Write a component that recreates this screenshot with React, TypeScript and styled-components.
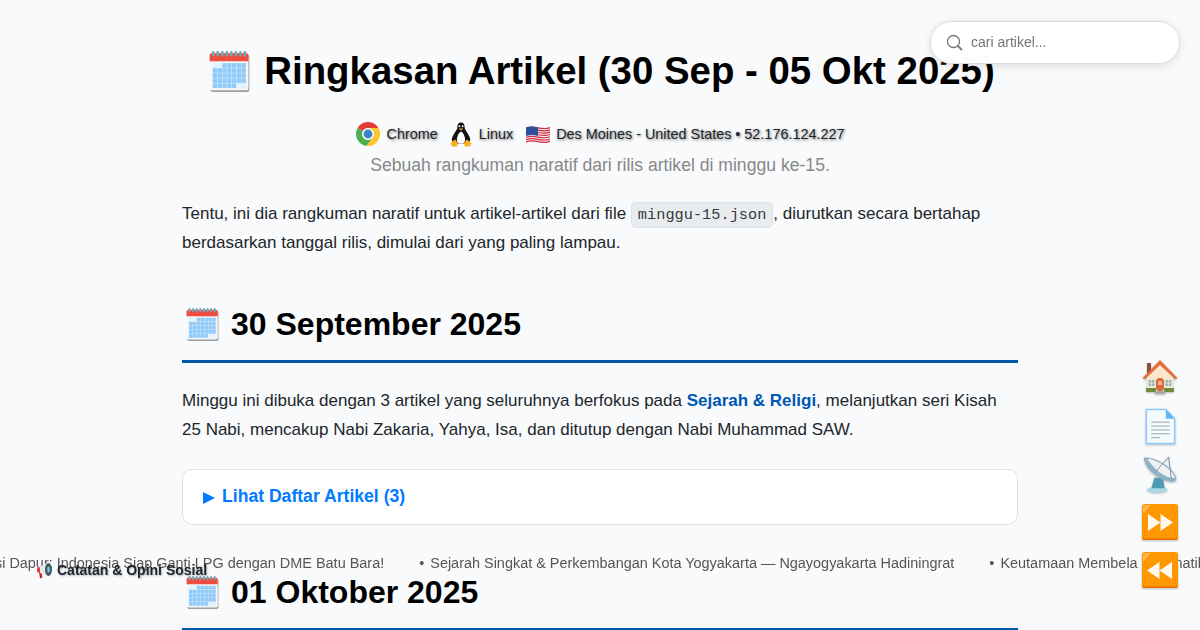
import React from 'react';
import styled, { createGlobalStyle } from 'styled-components';

const GlobalStyle = createGlobalStyle`
    html, body {
        margin: 0;
        padding: 0;
        height: 630px;
        overflow: hidden;
        background: #f8fafc;
        color: #212529;
        font-family: "Liberation Sans", Arial, sans-serif;
    }
`;

const Page = styled.div`
    width: 836px;
    margin: 0 auto;
    padding-top: 46px;
`;

const Title = styled.h1`
    margin: 0;
    display: flex;
    justify-content: center;
    align-items: center;
    gap: 14px;
    height: 50px;
    color: #000;
    font-size: 38.4px;
    font-weight: 700;
    line-height: 50px;

    svg {
        margin-left: 4px;
    }
`;

const Meta = styled.div`
    display: flex;
    justify-content: center;
    align-items: center;
    margin-top: 25px;
    height: 26px;
    font-size: 14.4px;
    color: #212529;
    text-shadow: 1px 1px 3px rgba(0, 0, 0, 0.55);
`;

const MetaItem = styled.span<{ $gap: number }>`
    display: inline-flex;
    align-items: center;
    gap: ${props => props.$gap}px;
    margin-right: 12px;

    &:last-child {
        margin-right: 0;
    }
`;

const Subtitle = styled.p`
    margin: 5px 0 0;
    text-align: center;
    color: #888;
    font-size: 17.6px;
    line-height: 26px;
`;

const Paragraph = styled.p<{ $afterHeading?: boolean }>`
    margin: ${props => (props.$afterHeading ? '23px' : '21px')} 0 0;
    font-size: 17px;
    line-height: 29px;
    color: #212529;
`;

const Code = styled.code`
    font-family: "Liberation Mono", monospace;
    font-size: 15.3px;
    line-height: 1;
    color: #343a40;
    background: #e9ecef;
    border: 1px solid #dee2e6;
    border-radius: 5px;
    padding: 3px 6px;
`;

const DateHeading = styled.h2`
    display: flex;
    align-items: center;
    gap: 12px;
    margin: 47px 0 0;
    padding-bottom: 16px;
    border-bottom: 3px solid #0056a8;
    color: #000;
    font-size: 32px;
    line-height: 40px;
    font-weight: 700;

    svg {
        margin-left: 4px;
    }
`;

const Category = styled.a`
    color: #0056b3;
    font-weight: 700;
    text-decoration: none;
`;

const Details = styled.div`
    margin-top: 25px;
    height: 52px;
    display: flex;
    align-items: center;
    gap: 7px;
    padding: 0 0 2px 20px;
    background: #fff;
    border: 1px solid #dee2e6;
    border-radius: 10px;
    color: #007bff;
    font-size: 17.6px;
    font-weight: 700;
`;

const Caret = styled.span`
    width: 0;
    height: 0;
    margin-top: 3px;
    border-left: 12px solid #007bff;
    border-top: 6.5px solid transparent;
    border-bottom: 6.5px solid transparent;
`;

const SearchBox = styled.div`
    position: fixed;
    top: 21px;
    left: 930px;
    width: 250px;
    height: 43px;
    box-sizing: border-box;
    display: flex;
    align-items: center;
    gap: 8px;
    padding: 0 0 1px 15px;
    background: rgba(255, 255, 255, 0.98);
    border: 1px solid #d8dade;
    border-radius: 22px;
    box-shadow: 0 2px 8px rgba(0, 0, 0, 0.12);
    color: #757575;
    font-size: 14px;
`;

const SideNav = styled.nav`
    position: fixed;
    top: 360px;
    right: 22px;
    display: flex;
    flex-direction: column;
    gap: 12px;
    z-index: 3;
`;

const SideItem = styled.a`
    width: 36px;
    height: 36px;
    display: flex;
    align-items: center;
    justify-content: center;
    filter: drop-shadow(0 1px 1px rgba(0, 0, 0, 0.25));

    svg {
        flex-shrink: 0;
    }
`;

const Ticker = styled.div`
    position: fixed;
    top: 554px;
    left: 0;
    right: 0;
    height: 18px;
    overflow: hidden;
    white-space: nowrap;
    font-size: 14.45px;
    line-height: 18px;
    color: #555;
`;

const TickerTrack = styled.div`
    display: flex;
    gap: 35px;
    transform: translateX(-50px);
`;

const Bullet = styled.span`
    margin-right: 6px;
`;

const TickerLabel = styled.div`
    position: fixed;
    top: 561px;
    left: 36px;
    display: flex;
    align-items: center;
    gap: 4px;
    font-size: 14px;
    line-height: 18px;
    font-weight: 700;
    color: #212529;
    text-shadow: 1px 1px 2px rgba(0, 0, 0, 0.3);
`;

function CalendarIcon({ size }: { size: number }) {
    const cells = [];
    for (let row = 0; row < 5; row++) {
        for (let col = 0; col < 7; col++) {
            const pale = (row === 0 && col < 2) || (row === 4 && col > 4);
            cells.push(
                <rect
                    key={`${row}-${col}`}
                    x={5.5 + col * 5.3}
                    y={15 + row * 5.6}
                    width={4.8}
                    height={5.1}
                    fill={pale ? '#e3f2fd' : '#90caf9'}
                />
            );
        }
    }
    return (
        <svg width={size} height={size} viewBox="2 1.5 44 45.5" style={{ flexShrink: 0 }}>
            <rect x="3" y="5" width="43" height="42" rx="2.5" fill="#9e9e9e" />
            <rect x="2" y="4" width="43" height="41" rx="2.5" fill="#f4f6f7" />
            <rect x="5" y="14.500" width="37.500" height="28.500" fill="#e3f2fd" />
            <path d="M2 13V6.5A2.5 2.5 0 0 1 4.5 4h38A2.5 2.5 0 0 1 45 6.5V13z" fill="#ef4c3f" />
            {cells}
            {[6, 11, 16, 21, 26, 31, 36, 41].map(x => (
                <rect key={x} x={x - 1.4} y="1.5" width="2.8" height="6" rx="1.4" fill="#6fa8b8" />
            ))}
        </svg>
    );
}

function ChromeIcon() {
    return (
        <svg width="24" height="24" viewBox="0 0 48 48">
            <path d="M3.2 12A24 24 0 0 1 44.8 12H24A12 12 0 0 0 13.6 18z" fill="#e53935" />
            <path d="M3.2 12A24 24 0 0 0 21 47.800L34.400 30A12 12 0 0 1 13.600 18z" fill="#4caf50" />
            <path d="M44.800 12A24 24 0 0 1 21 47.800L34.400 30A12 12 0 0 0 24 12z" fill="#fdc62e" />
            <circle cx="24" cy="24" r="11.500" fill="#f1f1f1" />
            <circle cx="24" cy="24" r="8.800" fill="#3f84c9" />
        </svg>
    );
}

function TuxIcon() {
    return (
        <svg width="22" height="25" viewBox="0 0 48 54">
            <path d="M24 1c-6 0-8 5-8 11 0 5-10 14-12 25-1 6 6 10 20 10s21-4 20-10c-2-11-12-20-12-25 0-6-2-11-8-11z" fill="#111" />
            <path d="M24 21c-4 0-9 10-9 18 0 5 4 8 9 8s9-3 9-8c0-8-5-18-9-18z" fill="#fff" />
            <circle cx="20.500" cy="9" r="2" fill="#fff" />
            <circle cx="27.500" cy="9" r="2" fill="#fff" />
            <path d="M19 14h10l-5 4z" fill="#f5b31b" />
            <path d="M1 46l10-8 7 8-3 7H5zM47 46l-10-8-7 8 3 7h10z" fill="#f5b31b" />
        </svg>
    );
}

function FlagIcon() {
    const stripes = [0, 2, 4, 6, 8, 10, 12];
    return (
        <svg width="26" height="20" viewBox="0 0 52 40">
            <path d="M2 7c16-6 32 5 48-1v30c-16 5-32-5-48 1z" fill="#eee" />
            {stripes.map(i => (
                <path
                    key={i}
                    d={`M2 ${7 + i * 2.3}c16-6 32 5 48-1v2.300c-16 6-32-5-48 1z`}
                    fill="#d7263d"
                />
            ))}
            <path d="M2 7c8-3 16-2 24 0v17c-8-2-16-3-24 0z" fill="#2f4f9f" />
        </svg>
    );
}

function SearchIcon() {
    return (
        <svg width="17" height="17" viewBox="0 0 17 17" fill="none" stroke="#777" strokeWidth="1.300">
            <circle cx="7.500" cy="7.500" r="6" />
            <path d="M12 12l4 4" strokeWidth="1.800" />
        </svg>
    );
}

function MegaphoneIcon() {
    return (
        <svg width="17" height="17" viewBox="0 0 17 17">
            <path d="M1 6.500 11 1v13L1 10z" fill="#e4e9ec" />
            <path d="M1 6.500l3-1.500v6l-3-1z" fill="#e53935" />
            <path d="M3 10.500l2.500 1 1 4-2.500 1z" fill="#c62828" />
            <ellipse cx="12.500" cy="7.500" rx="3.500" ry="6.500" fill="#455a64" />
            <ellipse cx="12.500" cy="7.500" rx="1.200" ry="3" fill="#78d0e8" />
        </svg>
    );
}

function HouseIcon() {
    return (
        <svg width="36" height="36" viewBox="0 0 36 36">
            <rect x="5" y="3" width="4" height="10" fill="#8d4f3a" />
            <path d="M5 17 18 5l13 12v14H5z" fill="#fbe6cc" />
            <path d="M0.500 18 18 0l17.500 18-2 1.500L18 5 2.500 19.500z" fill="#e56f3c" />
            <rect x="14" y="18" width="8" height="13" rx="3.500" fill="#d96a3d" />
            <rect x="16" y="21" width="4" height="4" fill="#f3b28a" />
            <rect x="6.500" y="20" width="6" height="6" fill="#8fb9bd" />
            <rect x="23.500" y="20" width="6" height="6" fill="#8fb9bd" />
            <path d="M9.500 20v6M6.500 23h6M26.500 20v6M23.500 23h6" stroke="#fbe6cc" strokeWidth="0.800" />
            <rect x="4" y="28" width="10" height="4" rx="1" fill="#6d8a3c" />
            <rect x="22" y="28" width="10" height="4" rx="1" fill="#6d8a3c" />
            <rect x="13" y="31" width="10" height="3" fill="#a9a9a9" />
        </svg>
    );
}

function DocumentIcon() {
    return (
        <svg width="32" height="37" viewBox="0 0 32 38">
            <path d="M2 1.500h20L31 11v25.500H2z" fill="#f5fafd" stroke="#90caf9" strokeWidth="1.500" />
            <path d="M22 1.500 31 11h-9z" fill="#64b5f6" />
            {[14, 18, 22, 26].map(y => (
                <rect key={y} x="7" y={y} width="19" height="1" fill="#90a4ae" />
            ))}
            <rect x="7" y="30" width="9" height="1" fill="#90a4ae" />
        </svg>
    );
}

function SatelliteIcon() {
    return (
        <svg width="36" height="38" viewBox="0 0 36 40">
            <ellipse cx="15" cy="36.500" rx="11" ry="3" fill="#a8d8ea" />
            <path d="M12 24h9l2 11H9z" fill="#4f9bb5" />
            <path d="M1 3c9-2 29 8 34 20 1 5-3 6-7 5C15 25 2 15 1 3z" fill="#8fb3c4" />
            <path d="M5 4c10 1 25 10 29 20-9 2-24-10-29-20z" fill="#eef2f4" />
            <path d="M14 17 27 2M27 2l3 23" stroke="#78909c" strokeWidth="1" fill="none" />
        </svg>
    );
}

function SkipButton({ flip }: { flip?: boolean }) {
    return (
        <svg width="36" height="36" viewBox="0 0 36 36">
            <rect x="0" y="1" width="36" height="35" rx="2.500" fill="#ef6c00" />
            <rect x="0" y="0" width="36" height="34.500" rx="2.500" fill="#ff9800" />
            <path d="M1 10V3a2 2 0 0 1 2-2h6z" fill="#ffb74d" />
            <path
                d={flip
                    ? 'M30 10v17l-12.500-8.500V27L5 18.500 17.500 10v8.500z'
                    : 'M6 10v17l12.500-8.500V27L31 18.500 18.500 10v8.500z'}
                fill="#fff8ee"
            />
        </svg>
    );
}

const tickerItems = [
    { bullet: false, text: 'Revolusi Dapur: Indonesia Siap Ganti LPG dengan DME Batu Bara!' },
    { bullet: true, text: 'Sejarah Singkat & Perkembangan Kota Yogyakarta — Ngayogyakarta Hadiningrat' },
    { bullet: true, text: 'Keutamaan Membela Informatika' },
];

export default function App() {
    return (
        <>
            <GlobalStyle />
            <Page>
                <Title>
                    <CalendarIcon size={41} />
                    Ringkasan Artikel (30 Sep - 05 Okt 2025)
                </Title>
                <Meta>
                    <MetaItem $gap={7}><ChromeIcon /> Chrome</MetaItem>
                    <MetaItem $gap={7}><TuxIcon /> Linux</MetaItem>
                    <MetaItem $gap={5}><FlagIcon /> Des Moines - United States • 52.176.124.227</MetaItem>
                </Meta>
                <Subtitle>Sebuah rangkuman naratif dari rilis artikel di minggu ke-15.</Subtitle>
                <Paragraph>
                    Tentu, ini dia rangkuman naratif untuk artikel-artikel dari file <Code>minggu-15.json</Code>, diurutkan secara bertahap berdasarkan tanggal rilis, dimulai dari yang paling lampau.
                </Paragraph>

                <DateHeading>
                    <CalendarIcon size={33} />
                    30 September 2025
                </DateHeading>
                <Paragraph $afterHeading>
                    Minggu ini dibuka dengan 3 artikel yang seluruhnya berfokus pada <Category>Sejarah &amp; Religi</Category>, melanjutkan seri Kisah 25 Nabi, mencakup Nabi Zakaria, Yahya, Isa, dan ditutup dengan Nabi Muhammad SAW.
                </Paragraph>
                <Details>
                    <Caret />
                    Lihat Daftar Artikel (3)
                </Details>

                <DateHeading>
                    <CalendarIcon size={33} />
                    01 Oktober 2025
                </DateHeading>
            </Page>

            <SearchBox>
                <SearchIcon />
                cari artikel...
            </SearchBox>

            <Ticker>
                <TickerTrack>
                    {tickerItems.map(item => (
                        <span key={item.text}>
                            {item.bullet && <Bullet>•</Bullet>}
                            {item.text}
                        </span>
                    ))}
                </TickerTrack>
            </Ticker>
            <TickerLabel>
                <MegaphoneIcon />
                Catatan &amp; Opini Sosial
            </TickerLabel>

            <SideNav>
                <SideItem><HouseIcon /></SideItem>
                <SideItem><DocumentIcon /></SideItem>
                <SideItem><SatelliteIcon /></SideItem>
                <SideItem><SkipButton /></SideItem>
                <SideItem><SkipButton flip /></SideItem>
            </SideNav>
        </>
    );
}
